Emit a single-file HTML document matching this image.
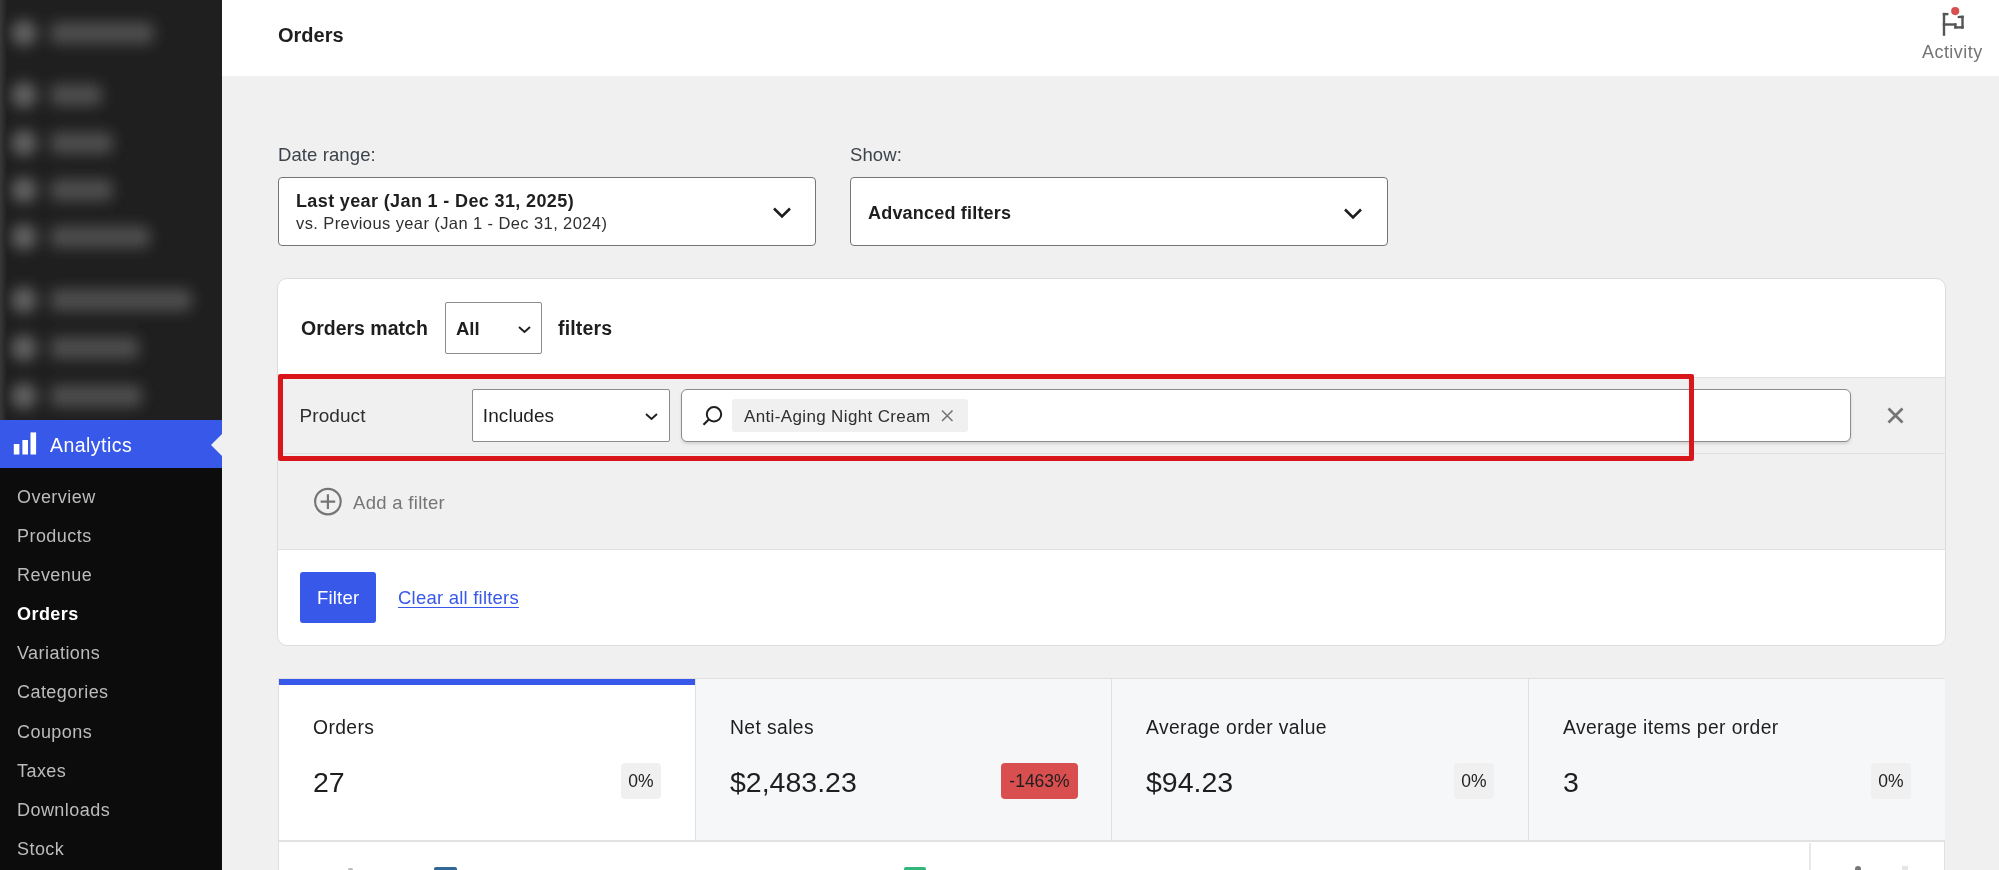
<!DOCTYPE html>
<html><head><meta charset="utf-8">
<style>
*{box-sizing:border-box;margin:0;padding:0}
html,body{width:1999px;height:870px;overflow:hidden;background:#f0f0f0;font-family:"Liberation Sans",sans-serif;color:#1e1e1e}
.abs{position:absolute;white-space:nowrap}
#side{position:absolute;left:0;top:0;width:222px;height:870px;background:#0c0c0c}
#blur{position:absolute;left:0;top:0;width:222px;height:420px;background:#1f1f1f;overflow:hidden}
.bl{position:absolute;background:#4a4a4a;filter:blur(5px);border-radius:8px}
.bc{position:absolute;background:#5a5a5a;filter:blur(5px);border-radius:50%}
#analytics{position:absolute;left:0;top:420px;width:222px;height:48px;background:#3858e9}
#analytics .t{position:absolute;left:50px;top:13.5px;font-size:19.5px;color:#fff;letter-spacing:0.45px}
.notch{position:absolute;left:211px;top:434px;width:0;height:0;border-top:11px solid transparent;border-bottom:11px solid transparent;border-right:11px solid #f0f0f0}
.sub{position:absolute;left:17px;font-size:18px;color:#bcbcbc;white-space:nowrap;letter-spacing:0.45px;margin-top:1px}
#header{position:absolute;left:222px;top:0;width:1777px;height:76px;background:#fff}
.lbl{position:absolute;font-size:18.5px;color:#3c434a;letter-spacing:0.1px;margin-top:-1px}
.dd{position:absolute;background:#fff;border:1.5px solid #757575;border-radius:4px}
.card{position:absolute;left:277px;top:278px;width:1668.5px;height:367.5px;background:#fff;border:1.5px solid #dcdcdc;border-radius:10px;overflow:hidden}
.bold{font-weight:bold}
.sel{position:absolute;background:#fff;border:1.5px solid #8c8c8c;border-radius:2px}
.row{position:absolute;left:0;width:100%;background:#f0f0f0}
.cell{position:absolute;top:679px;height:163px;background:#f6f7f9;border-right:1px solid #e0e0e0;border-bottom:2px solid #e2e2e2}
.cl{position:absolute;left:34px;top:37.5px;font-size:19.3px;letter-spacing:0.4px}
.cv{position:absolute;left:34px;top:87px;font-size:28.5px}
.badge{position:absolute;top:84px;height:36px;border-radius:4px;background:#f0f0f0;font-size:17.5px;text-align:center;line-height:36px}
</style></head><body><div id="root" style="position:absolute;left:0;top:0;width:1999px;height:870px;overflow:hidden;will-change:transform">
<div id="side">
  <div id="blur"><div style="position:absolute;left:0;top:0;width:7px;height:420px;background:linear-gradient(90deg,#383838,#2a2a2a 60%,rgba(31,31,31,0));z-index:2"></div><svg width="222" height="420" style="position:absolute;left:0;top:0"><defs><filter id="bf" x="-50%" y="-50%" width="200%" height="200%"><feGaussianBlur stdDeviation="7"/></filter></defs><g filter="url(#bf)">
<circle cx="24" cy="33" r="13" fill="#626262"/><rect x="50" y="22" width="104" height="22" rx="7" fill="#4e4e4e"/>
<circle cx="24" cy="95" r="13" fill="#626262"/><rect x="50" y="84" width="52" height="22" rx="7" fill="#4e4e4e"/>
<circle cx="24" cy="143" r="13" fill="#626262"/><rect x="50" y="132" width="63" height="22" rx="7" fill="#4e4e4e"/>
<circle cx="24" cy="190" r="13" fill="#626262"/><rect x="50" y="179" width="63" height="22" rx="7" fill="#4e4e4e"/>
<circle cx="24" cy="237" r="13" fill="#626262"/><rect x="50" y="226" width="100" height="22" rx="7" fill="#4e4e4e"/>
<circle cx="24" cy="300" r="13" fill="#626262"/><rect x="50" y="289" width="142" height="22" rx="7" fill="#4e4e4e"/>
<circle cx="24" cy="348" r="13" fill="#626262"/><rect x="50" y="337" width="89" height="22" rx="7" fill="#4e4e4e"/>
<circle cx="24" cy="396" r="13" fill="#626262"/><rect x="50" y="385" width="92" height="22" rx="7" fill="#4e4e4e"/>
</g></svg></div>
  <div id="analytics">
    <svg class="abs" style="left:13px;top:11px" width="24" height="24" viewBox="0 0 24 24">
      <rect x="0.8" y="13" width="5.6" height="10.5" fill="#fff"/>
      <rect x="9.4" y="9" width="5.6" height="14.5" fill="#fff"/>
      <rect x="17.5" y="1.4" width="5.6" height="22.1" fill="#fff"/>
    </svg>
    <div class="t">Analytics</div>
  </div>
  <div class="sub" style="top:486px">Overview</div>
  <div class="sub" style="top:525px">Products</div>
  <div class="sub" style="top:564px">Revenue</div>
  <div class="sub" style="top:603px;color:#fff;font-weight:bold">Orders</div>
  <div class="sub" style="top:642px">Variations</div>
  <div class="sub" style="top:681px">Categories</div>
  <div class="sub" style="top:721px">Coupons</div>
  <div class="sub" style="top:760px">Taxes</div>
  <div class="sub" style="top:799px">Downloads</div>
  <div class="sub" style="top:838px">Stock</div>
</div>
<div class="notch"></div>

<div id="header"></div>
<div class="abs bold" style="left:278px;top:24px;font-size:20px">Orders</div>
<svg class="abs" style="left:1915px;top:0" width="80" height="40" viewBox="0 0 80 40">
  <g fill="#555">
    <rect x="27.8" y="12.9" width="2.4" height="22.9"/>
    <rect x="27.8" y="12.9" width="5.6" height="2.4"/>
    <rect x="27.8" y="23.3" width="13.6" height="2.4"/>
    <rect x="39.3" y="23.3" width="2.2" height="5.3"/>
    <rect x="39.3" y="26.2" width="9.4" height="2.4"/>
    <rect x="46.3" y="15.7" width="2.4" height="12.9"/>
    <rect x="42.6" y="15.7" width="6.1" height="2.4"/>
  </g>
  <circle cx="40.2" cy="11.1" r="6" fill="#fff"/>
  <circle cx="40.2" cy="11.1" r="4.1" fill="#d94f4f"/>
</svg>
<div class="abs" style="left:1922px;top:42px;font-size:18px;letter-spacing:0.45px;color:#757575">Activity</div>

<div class="lbl" style="left:278px;top:145px">Date range:</div>
<div class="lbl" style="left:850px;top:145px">Show:</div>
<div class="dd" style="left:278px;top:177px;width:538px;height:69px"></div>
<div class="abs bold" style="left:296px;top:191px;font-size:18px;letter-spacing:0.37px">Last year (Jan 1 - Dec 31, 2025)</div>
<div class="abs" style="left:296px;top:214px;font-size:16.5px;letter-spacing:0.4px;color:#2f2f2f">vs. Previous year (Jan 1 - Dec 31, 2024)</div>
<svg class="abs" style="left:771px;top:204px" width="22" height="16" viewBox="0 0 22 16"><path d="M3 4.5L11 12.5L19 4.5" fill="none" stroke="#1e1e1e" stroke-width="2.6"/></svg>
<div class="dd" style="left:850px;top:177px;width:538px;height:69px"></div>
<div class="abs bold" style="left:868px;top:202.5px;font-size:18px;letter-spacing:0.2px">Advanced filters</div>
<svg class="abs" style="left:1342px;top:204.5px" width="22" height="16" viewBox="0 0 22 16"><path d="M3 4.5L11 12.5L19 4.5" fill="none" stroke="#1e1e1e" stroke-width="2.6"/></svg>

<div class="card">
  <div class="row" style="top:97.5px;height:173px;border-top:1.5px solid #e0e0e0"></div>
  <div class="row" style="top:173.5px;height:97px;border-top:1.5px solid #e0e0e0;border-bottom:1.5px solid #e0e0e0"></div>
</div>
<div class="abs bold" style="left:301px;top:316.5px;font-size:19.5px;letter-spacing:0px">Orders match</div>
<div class="sel" style="left:445px;top:302px;width:97px;height:52px"></div>
<div class="abs bold" style="left:456px;top:317.5px;font-size:18.5px">All</div>
<svg class="abs" style="left:515px;top:322px" width="18" height="14" viewBox="0 0 18 14"><path d="M4 5L9.5 10L15 5" fill="none" stroke="#1e1e1e" stroke-width="1.9"/></svg>
<div class="abs bold" style="left:558px;top:316.5px;font-size:19.5px;letter-spacing:0.15px">filters</div>

<div class="abs" style="left:299.5px;top:405px;font-size:19px;letter-spacing:0.08px;color:#2f2f2f">Product</div>
<div class="sel" style="left:472px;top:389px;width:198px;height:53px"></div>
<div class="abs" style="left:482.8px;top:405px;font-size:19px;letter-spacing:0.08px">Includes</div>
<svg class="abs" style="left:642px;top:409px" width="18" height="14" viewBox="0 0 18 14"><path d="M4 5L9.5 10L15 5" fill="none" stroke="#1e1e1e" stroke-width="1.9"/></svg>
<div class="abs" style="left:681px;top:389px;width:1170px;height:53px;background:#fff;border:1.5px solid #8c8c8c;border-radius:6px;box-shadow:0 2px 3px rgba(0,0,0,0.12)"></div>
<svg class="abs" style="left:700px;top:402px" width="26" height="26" viewBox="0 0 26 26"><circle cx="14" cy="12.3" r="7.2" fill="none" stroke="#1e1e1e" stroke-width="2"/><path d="M9 17.3L3.5 22.8" stroke="#1e1e1e" stroke-width="2.2"/></svg>
<div class="abs" style="left:732px;top:399px;width:236px;height:33px;background:#f0f0f0;border-radius:3px"></div>
<div class="abs" style="left:744px;top:407px;font-size:17px;letter-spacing:0.36px;color:#2f2f2f">Anti-Aging Night Cream</div>
<svg class="abs" style="left:939px;top:407px" width="16" height="16" viewBox="0 0 16 16"><path d="M3 3.5L13.5 14M13.5 3.5L3 14" stroke="#757575" stroke-width="1.6"/></svg>
<svg class="abs" style="left:1884px;top:404px" width="22" height="22" viewBox="0 0 22 22"><path d="M4.5 4.5L18.5 18.5M18.5 4.5L4.5 18.5" stroke="#757575" stroke-width="2.8"/></svg>

<svg class="abs" style="left:312px;top:486px" width="32" height="32" viewBox="0 0 32 32"><circle cx="15.9" cy="15.6" r="12.8" fill="none" stroke="#757575" stroke-width="2.2"/><path d="M15.9 8.3V22.9M8.6 15.6H23.2" stroke="#757575" stroke-width="2.2"/></svg>
<div class="abs" style="left:353px;top:492px;font-size:18.5px;letter-spacing:0.3px;color:#757575">Add a filter</div>

<div class="abs" style="left:300px;top:572px;width:76px;height:51px;background:#3858e9;border-radius:3px"></div>
<div class="abs" style="left:317px;top:587px;font-size:18.5px;color:#fff;letter-spacing:0.2px">Filter</div>
<div class="abs" style="left:398px;top:587px;font-size:18.5px;color:#3858e9;letter-spacing:0.22px;text-decoration:underline;text-underline-offset:3px">Clear all filters</div>

<div class="abs" style="left:278px;top:678px;width:1667px;height:193px;background:#fff;border:1px solid #e0e0e0"></div>
<div class="cell" style="left:279px;width:417px;background:#fff">
  <div class="abs" style="left:0;top:0;width:416px;height:6px;background:#3858e9"></div>
  <div class="cl">Orders</div><div class="cv">27</div>
  <div class="badge" style="left:342px;width:40px">0%</div>
</div>
<div class="cell" style="left:696px;width:416px">
  <div class="cl">Net sales</div><div class="cv">$2,483.23</div>
  <div class="badge" style="left:305px;width:77px;background:#d94f4f">-1463%</div>
</div>
<div class="cell" style="left:1112px;width:417px">
  <div class="cl">Average order value</div><div class="cv">$94.23</div>
  <div class="badge" style="left:342px;width:40px">0%</div>
</div>
<div class="cell" style="left:1529px;width:416px;border-right:none">
  <div class="cl">Average items per order</div><div class="cv">3</div>
  <div class="badge" style="left:342px;width:40px">0%</div>
</div>
<div class="abs" style="left:348px;top:868px;width:5px;height:3px;background:#bbb;border-radius:2px"></div>
<div class="abs" style="left:1809px;top:843px;width:2px;height:30px;background:#e8e8e8"></div>
<div class="abs" style="left:434px;top:867px;width:23px;height:10px;background:#326896;border-radius:2px"></div>
<div class="abs" style="left:904px;top:867px;width:22px;height:10px;background:#33b679;border-radius:2px"></div>
<div class="abs" style="left:1855px;top:866px;width:6px;height:10px;background:#777;border-radius:3px"></div>
<div class="abs" style="left:1902px;top:866px;width:6px;height:10px;background:#e6e6e6"></div>

<div class="abs" style="left:278px;top:374px;width:1416px;height:87px;border:5.5px solid #d9161a;border-radius:2px"></div>
</div></body></html>
